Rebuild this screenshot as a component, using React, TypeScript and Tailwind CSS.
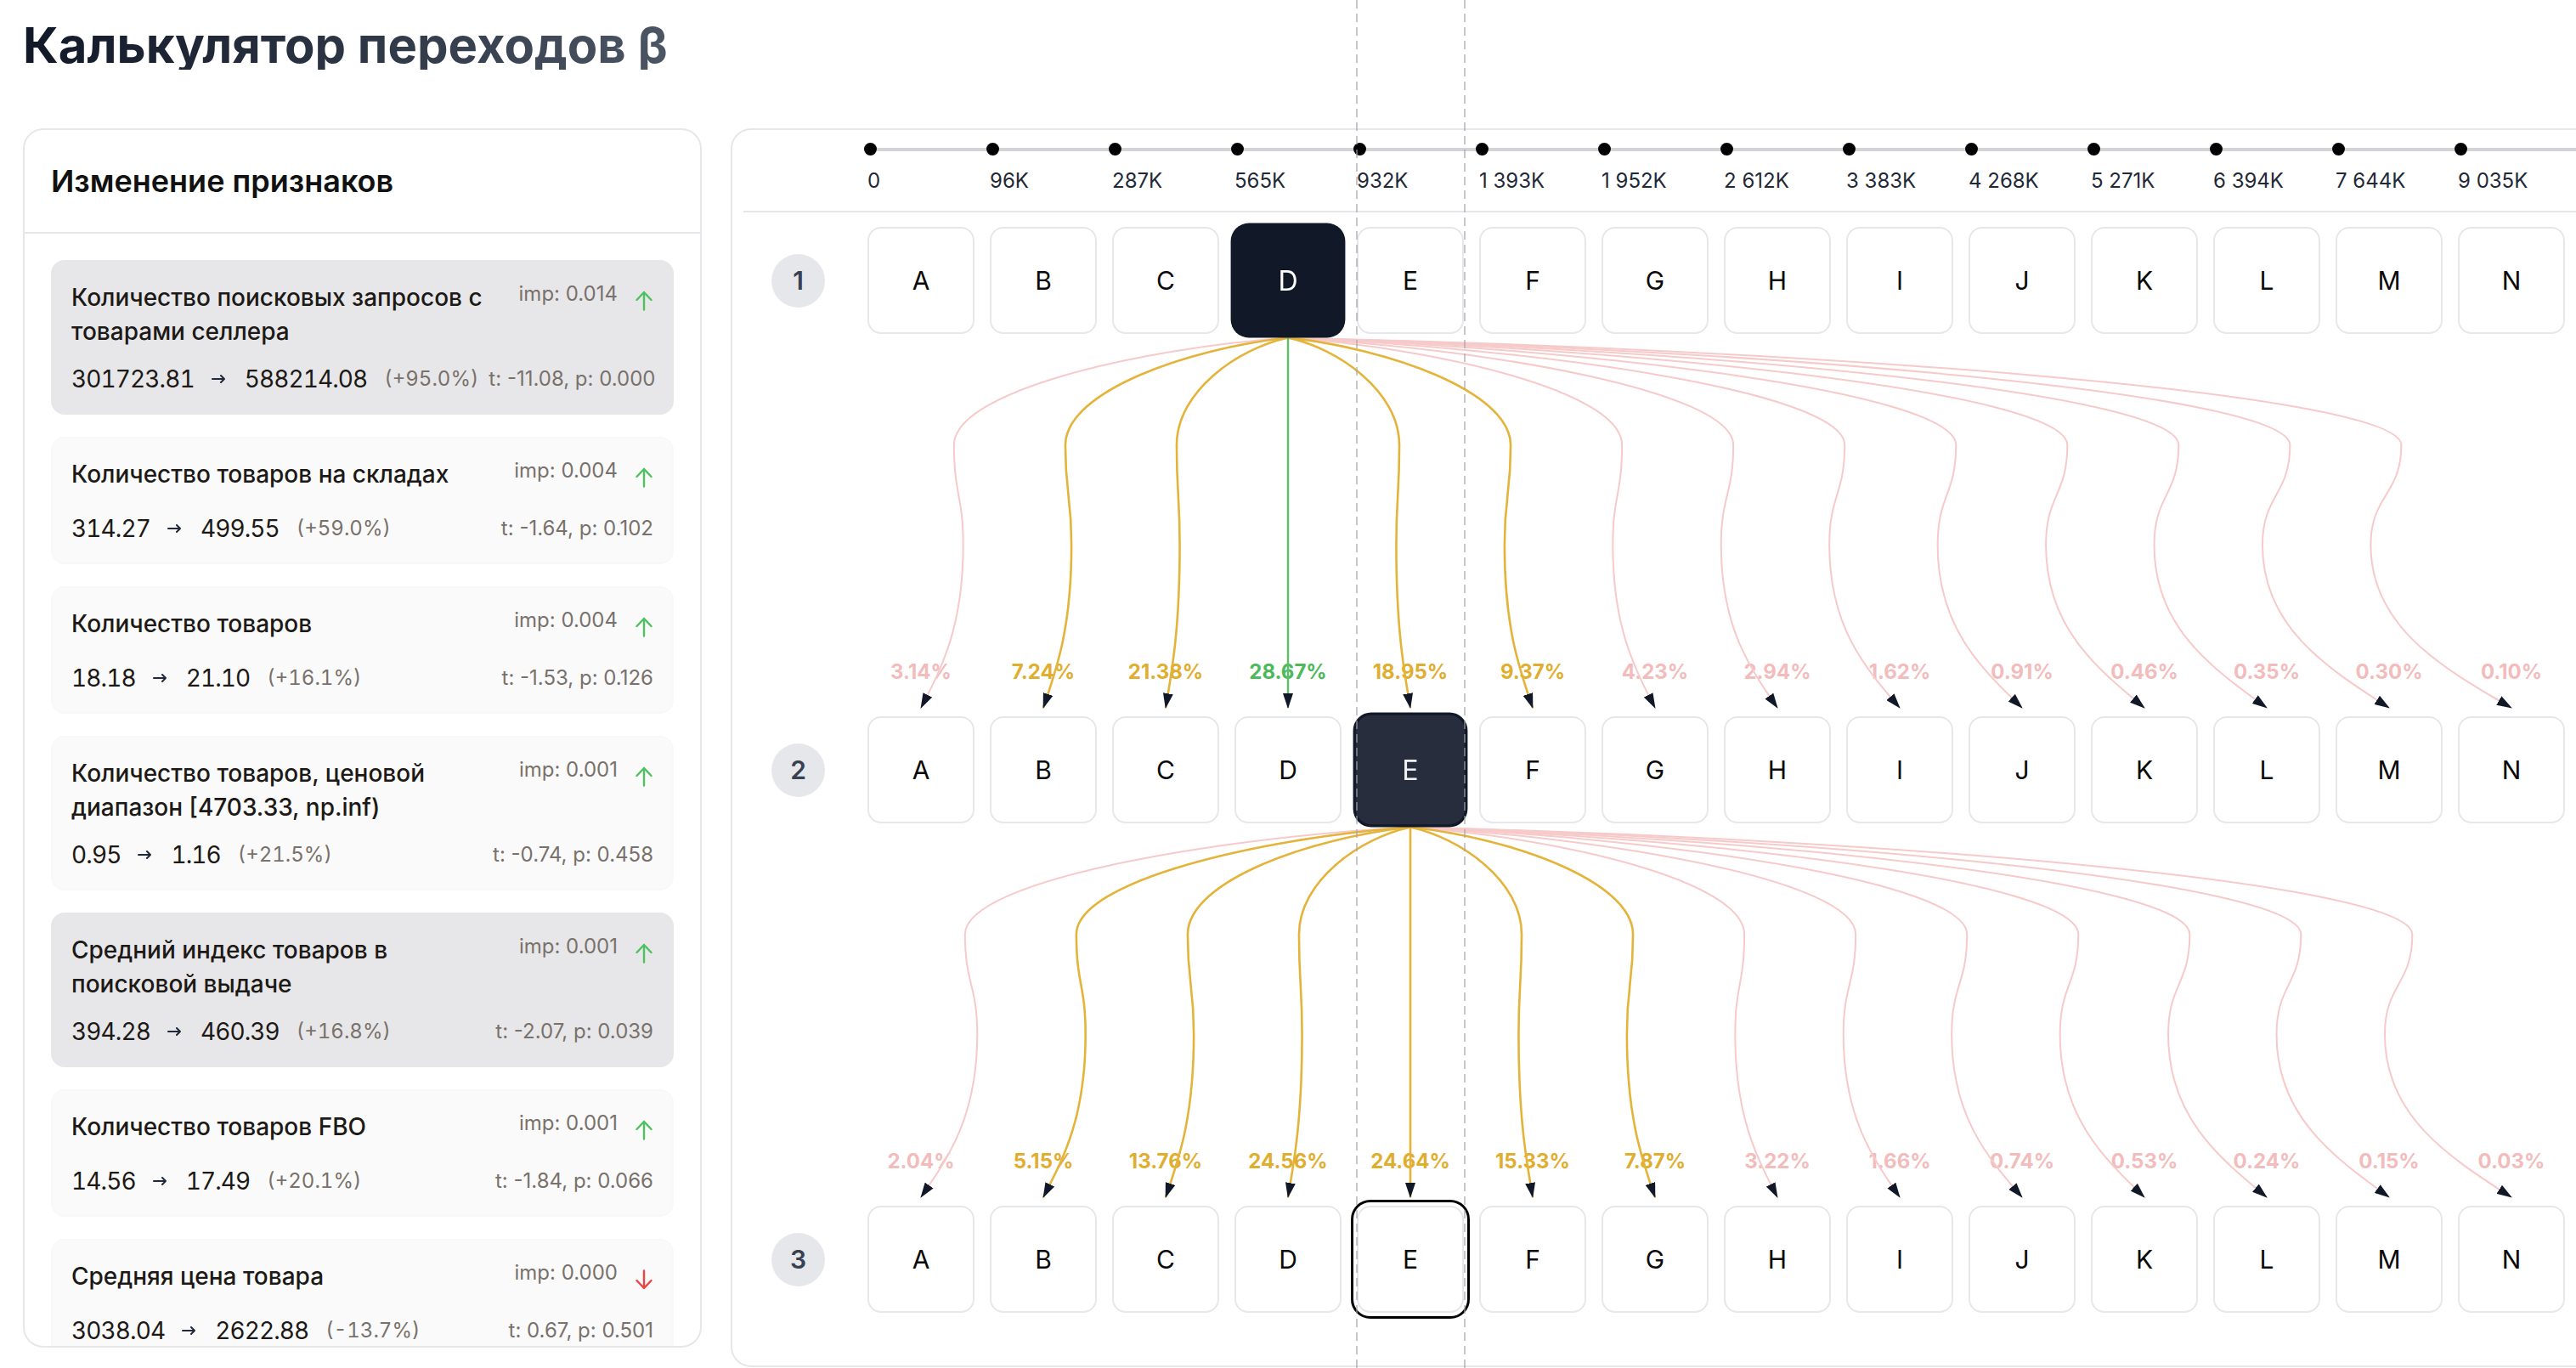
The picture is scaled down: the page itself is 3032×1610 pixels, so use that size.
import React from "react";

const COLS = ["A", "B", "C", "D", "E", "F", "G", "H", "I", "J", "K", "L", "M", "N"];
const TICKS = [
  "0",
  "96K",
  "287K",
  "565K",
  "932K",
  "1 393K",
  "1 952K",
  "2 612K",
  "3 383K",
  "4 268K",
  "5 271K",
  "6 394K",
  "7 644K",
  "9 035K",
];

const STEP1 = [3.14, 7.24, 21.38, 28.67, 18.95, 9.37, 4.23, 2.94, 1.62, 0.91, 0.46, 0.35, 0.3, 0.1];
const STEP2 = [2.04, 5.15, 13.76, 24.56, 24.64, 15.33, 7.87, 3.22, 1.66, 0.74, 0.53, 0.24, 0.15, 0.03];

type Feature = {
  name: string;
  imp: string;
  from: string;
  to: string;
  delta: string;
  stat: string;
  up: boolean;
  active?: boolean;
};

const features: Feature[] = [
  {
    name: "Количество поисковых запросов с товарами селлера",
    imp: "0.014",
    from: "301723.81",
    to: "588214.08",
    delta: "(+95.0%)",
    stat: "t: -11.08, p: 0.000",
    up: true,
    active: true,
  },
  {
    name: "Количество товаров на складах",
    imp: "0.004",
    from: "314.27",
    to: "499.55",
    delta: "(+59.0%)",
    stat: "t: -1.64, p: 0.102",
    up: true,
  },
  {
    name: "Количество товаров",
    imp: "0.004",
    from: "18.18",
    to: "21.10",
    delta: "(+16.1%)",
    stat: "t: -1.53, p: 0.126",
    up: true,
  },
  {
    name: "Количество товаров, ценовой диапазон [4703.33, np.inf)",
    imp: "0.001",
    from: "0.95",
    to: "1.16",
    delta: "(+21.5%)",
    stat: "t: -0.74, p: 0.458",
    up: true,
  },
  {
    name: "Средний индекс товаров в поисковой выдаче",
    imp: "0.001",
    from: "394.28",
    to: "460.39",
    delta: "(+16.8%)",
    stat: "t: -2.07, p: 0.039",
    up: true,
    active: true,
  },
  {
    name: "Количество товаров FBO",
    imp: "0.001",
    from: "14.56",
    to: "17.49",
    delta: "(+20.1%)",
    stat: "t: -1.84, p: 0.066",
    up: true,
  },
  {
    name: "Средняя цена товара",
    imp: "0.000",
    from: "3038.04",
    to: "2622.88",
    delta: "(-13.7%)",
    stat: "t: 0.67, p: 0.501",
    up: false,
  },
];

// geometry of the grid (px, relative to the rows block)
const BOX = 126;
const PITCH = 144;
const X0 = 159;
const ROW_PITCH = 576;
const cx = (i: number) => X0 + PITCH * i + BOX / 2;

function linkPath(sx: number, sy: number, tx: number, ty: number) {
  const d = sx - tx;
  const h = ty - sy;
  const vx = tx + 0.09 * d;
  const vy = sy + 0.29 * h;
  const wx = tx + 0.115 * d;
  const wy = sy + 0.56 * h;
  const c1 = `${sx + 0.45 * (vx - sx)},${sy + 0.1 * (vy - sy)} ${vx},${sy + 0.5 * (vy - sy)} ${vx},${vy}`;
  const c2 = `${vx},${vy + 0.5 * (wy - vy)} ${wx},${wy - 0.5 * (wy - vy)} ${wx},${wy}`;
  const c3 = `${wx},${wy + 0.5 * (ty - wy)} ${tx - 0.5 * (tx - wx)},${ty - 0.25 * (ty - wy)} ${tx},${ty}`;
  return `M${sx},${sy} C${c1} C${c2} C${c3}`;
}

function tone(v: number) {
  if (v >= 25) return { line: "#5cbf68", text: "#4cb95a", width: 2.4, rank: 2 };
  if (v >= 5) return { line: "#e4b33a", text: "#dfae2e", width: 2.6, rank: 1 };
  return { line: "#f7caca", text: "#f2bcbc", width: 2, rank: 0 };
}

function ArrowUp({ down }: { down?: boolean }) {
  return (
    <svg
      width="20"
      height="24"
      viewBox="0 0 20 24"
      fill="none"
      stroke="currentColor"
      strokeWidth="2.4"
      strokeLinecap="round"
      strokeLinejoin="round"
    >
      {down ? <path d="M10 1.5V22M1.5 13l8.5 9 8.5-9" /> : <path d="M10 22.5V2M1.5 11l8.5-9 8.5 9" />}
    </svg>
  );
}

function ArrowRight() {
  return (
    <svg
      width="16"
      height="10"
      viewBox="0 0 16 10"
      fill="none"
      stroke="currentColor"
      strokeWidth="2"
      strokeLinecap="round"
      strokeLinejoin="round"
      className="ml-[20px] mr-[23px] shrink-0 text-[#1e293b]"
    >
      <path d="M1 5h14M11 1l4 4-4 4" />
    </svg>
  );
}

function FeatureCard({ f }: { f: Feature }) {
  return (
    <div
      className={`shrink-0 rounded-[16px] border-2 px-[22px] pt-[22px] pb-[20px] ${
        f.active ? "border-[#e7e7e9] bg-[#e7e7e9]" : "border-[#f8f8f8] bg-[#fafafa]"
      }`}
    >
      <div className="flex items-start justify-between gap-[24px]">
        <div className="text-[28px] leading-[40px] font-medium text-[#1c1917]">{f.name}</div>
        <div className="flex shrink-0 items-start gap-[20px]">
          <span className="text-[24px] leading-[32px] text-stone-500">imp: {f.imp}</span>
          <div className={`flex h-[48px] w-[22px] items-center justify-center ${f.up ? "text-[#4fc160]" : "text-[#ef4444]"}`}>
            <ArrowUp down={!f.up} />
          </div>
        </div>
      </div>
      <div className="mt-[16px] flex h-[40px] items-center justify-between gap-[12px] whitespace-nowrap">
        <div className="flex shrink-0 items-center text-[28px] text-[#1c1917] tabular-nums">
          <span className="tracking-[-0.9px]">{f.from}</span>
          <ArrowRight />
          <span className="tracking-[-0.9px]">{f.to}</span>
          <span className="ml-[20px] text-[24px] text-stone-500">{f.delta}</span>
        </div>
        <span className="shrink-0 text-[24px] text-stone-500">{f.stat}</span>
      </div>
    </div>
  );
}

function Links() {
  const steps = [
    { r: 0, sel: 3, vals: STEP1 },
    { r: 1, sel: 4, vals: STEP2 },
  ];
  const links: { d: string; color: string; width: number; rank: number; key: string }[] = [];
  const labels: React.ReactElement[] = [];
  steps.forEach(({ r, sel, vals }) => {
    const sx = cx(sel);
    const sy = ROW_PITCH * r + BOX + 4.5;
    const ty = ROW_PITCH * (r + 1) - 10;
    vals.forEach((v, j) => {
      const t = tone(v);
      links.push({ d: linkPath(sx, sy, cx(j), ty), color: t.line, width: t.width, rank: t.rank, key: `${r}-${j}` });
      labels.push(
        <text
          key={`l${r}-${j}`}
          x={cx(j)}
          y={ROW_PITCH * (r + 1) - 53}
          textAnchor="middle"
          dominantBaseline="central"
          fontSize="24"
          fontWeight="700"
          fill={t.text}
        >
          {v.toFixed(2)}%
        </text>
      );
    });
  });
  links.sort((a, b) => a.rank - b.rank);
  return (
    <svg className="pointer-events-none absolute left-0 top-0 overflow-visible" width="2236" height="1278">
      <defs>
        <marker
          id="tip"
          viewBox="0 0 18 12"
          refX="17"
          refY="6"
          markerWidth="18"
          markerHeight="12"
          markerUnits="userSpaceOnUse"
          orient="auto"
        >
          <path d="M0,0 L18,6 L0,12 z" fill="#111827" />
        </marker>
      </defs>
      {labels}
      {links.map((l) => (
        <path key={l.key} d={l.d} fill="none" stroke={l.color} strokeWidth={l.width} markerEnd="url(#tip)" />
      ))}
    </svg>
  );
}

function Cell({ label, kind }: { label: string; kind?: "filled" | "dark" | "outlined" }) {
  if (kind === "filled")
    return (
      <div className="flex h-[126px] w-[126px] shrink-0 scale-[1.07] items-center justify-center rounded-[20px] bg-[#111827] text-[30px] text-white">
        {label}
      </div>
    );
  if (kind === "dark")
    return (
      <div className="flex h-[126px] w-[126px] shrink-0 scale-[1.07] items-center justify-center rounded-[20px] border-[3px] border-[#111827] bg-[#282d3e] text-[30px] text-[#f1f1f3]">
        {label}
      </div>
    );
  if (kind === "outlined")
    return (
      <div className="flex h-[126px] w-[126px] shrink-0 items-center justify-center rounded-[16px] border-2 border-[#e5e7eb] bg-white text-[30px] text-[#0a0a0a] outline-[3px] outline-offset-[4px] outline-black outline-solid">
        {label}
      </div>
    );
  return (
    <div className="flex h-[126px] w-[126px] shrink-0 items-center justify-center rounded-[16px] border-2 border-[#e5e7eb] bg-white text-[30px] text-[#0a0a0a]">
      {label}
    </div>
  );
}

function StepRow({ n, pick }: { n: number; pick: Record<number, "filled" | "dark" | "outlined"> }) {
  return (
    <div className="flex h-[126px] items-center pl-[46px]">
      <div className="flex h-[63px] w-[63px] shrink-0 items-center justify-center rounded-full bg-[#e5e7eb] text-[30px] font-semibold text-[#374151]">
        {n}
      </div>
      <div className="ml-[50px] flex gap-[18px]">
        {COLS.map((c, i) => (
          <Cell key={c} label={c} kind={pick[i]} />
        ))}
      </div>
    </div>
  );
}

export default function App() {
  return (
    <div className="relative h-[1610px] w-[3032px] overflow-hidden bg-white font-['Inter','Noto_Sans',sans-serif]">
      <div className="pl-[27px] pt-[24px]">
        <h1 className="inline-block bg-linear-to-r from-[#111827] to-[#4b5563] bg-clip-text text-[58px] leading-[58px] font-bold text-transparent">
          Калькулятор переходов β
        </h1>

        <div className="mt-[69px] flex items-start gap-[34px]">
          {/* left panel */}
          <div className="flex h-[1435px] w-[799px] shrink-0 flex-col overflow-hidden rounded-[24px] border-2 border-[#e5e7eb] bg-white">
            <div className="flex h-[122px] shrink-0 items-center border-b-2 border-[#e5e7eb] px-[31px]">
              <h2 className="text-[36px] font-semibold text-[#111111]">Изменение признаков</h2>
            </div>
            <div className="flex flex-1 flex-col gap-[26px] overflow-hidden px-[31px] pt-[31px]">
              {features.map((f) => (
                <FeatureCard key={f.name} f={f} />
              ))}
            </div>
          </div>

          {/* right panel */}
          <div className="w-[2240px] shrink-0 rounded-[24px] border-2 border-[#e5e7eb] bg-white pb-[62px]">
            <div className="flex pl-[155px] pt-[15px] pb-[19px]">
              {TICKS.map((t, i) => (
                <div key={t} className={`flex flex-col ${i === TICKS.length - 1 ? "flex-1" : "w-[144px] shrink-0"}`}>
                  <div className="flex h-[15px] items-center">
                    <div className="h-[15px] w-[15px] shrink-0 rounded-full bg-black" />
                    <div className="h-[4px] flex-1 bg-[#d1d5db]" />
                  </div>
                  <span className="mt-[14px] pl-[4px] text-[24px] leading-[32px] text-[#1f2937]">{t}</span>
                </div>
              ))}
            </div>
            <div className="ml-[13px] h-[2px] bg-[#e5e7eb]" />

            <div className="relative mt-[17px]">
              <Links />
              <div className="relative flex flex-col gap-[450px]">
                <StepRow n={1} pick={{ 3: "filled" }} />
                <StepRow n={2} pick={{ 4: "dark" }} />
                <StepRow n={3} pick={{ 4: "outlined" }} />
              </div>
            </div>
          </div>
        </div>
      </div>

      {/* guides of the current column */}
      <div className="pointer-events-none absolute top-0 bottom-0 left-[1596px] w-[2px] bg-[repeating-linear-gradient(to_bottom,rgba(160,160,168,0.6)_0px,rgba(160,160,168,0.6)_10px,transparent_10px,transparent_16px)]" />
      <div className="pointer-events-none absolute top-0 bottom-0 left-[1723px] w-[2px] bg-[repeating-linear-gradient(to_bottom,rgba(160,160,168,0.6)_0px,rgba(160,160,168,0.6)_10px,transparent_10px,transparent_16px)]" />
    </div>
  );
}
